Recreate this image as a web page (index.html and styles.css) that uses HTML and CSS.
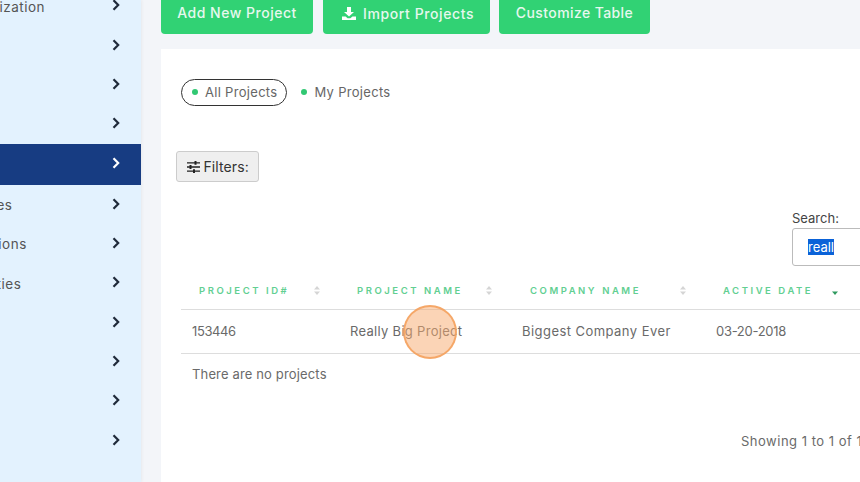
FILE: index.html
```html
<!DOCTYPE html>
<html lang="en">

<head>
    <meta charset="UTF-8">
    <meta name="viewport" content="width=device-width, initial-scale=1.0">
    <title>Projects</title>
    <link rel="stylesheet" href="styles.css">
</head>

<body>
    <svg class="defs" width="0" height="0">
        <symbol id="chevron" viewBox="0 0 8 12">
            <path d="M1.5 1.2 6.2 6 1.5 10.8" fill="none" stroke="currentColor" stroke-width="2.2" />
        </symbol>
        <symbol id="sort" viewBox="0 0 6 9">
            <path d="M3 0 6 3.4H0Z" />
            <path d="M3 9 0 5.6H6Z" />
        </symbol>
        <symbol id="sort-desc" viewBox="0 0 6 9">
            <path d="M3 9 0 5.6H6Z" />
        </symbol>
    </svg>

    <nav class="sidebar">
        <ul class="menu">
            <li class="menu-item"><span>Organization</span><svg class="chevron"><use href="#chevron" /></svg></li>
            <li class="menu-item"><span>Users</span><svg class="chevron"><use href="#chevron" /></svg></li>
            <li class="menu-item"><span>Roles</span><svg class="chevron"><use href="#chevron" /></svg></li>
            <li class="menu-item"><span>Sites</span><svg class="chevron"><use href="#chevron" /></svg></li>
            <li class="menu-item active"><span>Jobs</span><svg class="chevron"><use href="#chevron" /></svg></li>
            <li class="menu-item"><span>Devices</span><svg class="chevron"><use href="#chevron" /></svg></li>
            <li class="menu-item"><span>Donations</span><svg class="chevron"><use href="#chevron" /></svg></li>
            <li class="menu-item"><span>Activities</span><svg class="chevron"><use href="#chevron" /></svg></li>
            <li class="menu-item"><span>Tasks</span><svg class="chevron"><use href="#chevron" /></svg></li>
            <li class="menu-item"><span>Files</span><svg class="chevron"><use href="#chevron" /></svg></li>
            <li class="menu-item"><span>Logs</span><svg class="chevron"><use href="#chevron" /></svg></li>
            <li class="menu-item"><span>Help</span><svg class="chevron"><use href="#chevron" /></svg></li>
        </ul>
    </nav>

    <main class="content">
        <div class="actions">
            <button class="action-btn btn-add">Add New Project</button>
            <button class="action-btn btn-import">
                <svg class="import-icon" viewBox="0 0 14 13">
                    <path d="M5 0H9V5H12L7 9.6 2 5H5Z" />
                    <path d="M0 9.4H3.6L5.6 11.2H8.4L10.4 9.4H14V13H0Z" />
                </svg>
                Import Projects
            </button>
            <button class="action-btn btn-custom">Customize Table</button>
        </div>

        <section class="card">
            <div class="tabs">
                <a class="tab selected"><i class="dot"></i>All Projects</a>
                <a class="tab"><i class="dot"></i>My Projects</a>
            </div>

            <button class="filter-btn">
                <svg class="filter-icon" viewBox="0 0 13 12">
                    <path d="M0 1.2H13V2.6H0ZM0 5.3H13V6.7H0ZM0 9.4H13V10.8H0Z" />
                    <path d="M7.5 0H9.5V3.8H7.5ZM2.5 4.1H4.5V7.9H2.5ZM6 8.2H8V12H6Z" />
                </svg>
                Filters:
            </button>

            <div class="search">
                <label class="search-label">Search:</label>
                <div class="search-box"><span class="search-text">reall</span></div>
            </div>

            <table class="projects">
                <thead>
                    <tr>
                        <th class="col-id">Project ID#<svg class="sort"><use href="#sort" /></svg></th>
                        <th class="col-name">Project Name<svg class="sort"><use href="#sort" /></svg></th>
                        <th class="col-company">Company Name<svg class="sort"><use href="#sort" /></svg></th>
                        <th class="col-date">Active Date<svg class="sort sorted"><use href="#sort-desc" /></svg></th>
                    </tr>
                </thead>
                <tbody>
                    <tr>
                        <td class="id-cell">153446</td>
                        <td>Really Big Project</td>
                        <td class="company-cell">Biggest Company Ever</td>
                        <td class="date-cell">03-20-2018</td>
                    </tr>
                </tbody>
            </table>

            <p class="empty">There are no projects</p>
            <p class="showing">Showing 1 to 1 of 1 entries</p>
        </section>
    </main>

    <div class="click-marker"></div>
</body>

</html>
```

FILE: styles.css
```css
* {
    box-sizing: border-box;
}

body {
    display: flex;
    width: 860px;
    height: 482px;
    margin: 0;
    overflow: hidden;
    position: relative;
    font-family: Inter, "Liberation Sans", sans-serif;
    color: #5c5c5c;
    background-color: #f3f5f9;
}

.defs {
    position: absolute;
}

.sidebar {
    flex: none;
    width: 141px;
    background-color: #e3f2fe;
    box-shadow: 1px 0 3px rgba(0, 0, 0, 0.05);
    overflow: hidden;
}

.menu {
    list-style: none;
    width: 183px;
    margin: -13px 0 0 -42px;
    padding: 0;
}

.menu-item {
    display: flex;
    align-items: center;
    justify-content: space-between;
    height: 39.35px;
    padding-right: 21px;
    font-size: 13.5px;
    letter-spacing: 0.5px;
    color: #555;
}

.menu-item.active {
    height: 41px;
    color: #fff;
    background-color: #173c82;
}

.chevron {
    width: 8px;
    height: 12px;
    margin-top: -3px;
    color: #1f2a3a;
}

.active .chevron {
    color: #fff;
}

.content {
    flex: none;
    width: 900px;
    margin: -8px 0 0 20px;
}

.actions {
    display: flex;
    gap: 10px;
    margin-bottom: 15px;
}

.action-btn {
    height: 42px;
    padding: 0 0 2px;
    border: none;
    border-radius: 4px;
    font-family: inherit;
    font-size: 14px;
    font-weight: 500;
    letter-spacing: 0.5px;
    color: #e6f8ee;
    background-color: #31d274;
}

.btn-add {
    width: 152px;
}

.btn-import {
    display: flex;
    align-items: center;
    gap: 7px;
    width: 167px;
    padding: 0 0 0 19px;
    letter-spacing: 0.6px;
}

.btn-custom {
    width: 151px;
    margin-left: -1px;
    letter-spacing: 0.4px;
}

.import-icon {
    width: 14px;
    height: 13px;
    fill: #fff;
}

.card {
    height: 460px;
    padding: 30px 20px;
    background-color: #fff;
}

.tabs {
    display: flex;
    align-items: center;
    gap: 14px;
}

.tab {
    display: flex;
    align-items: center;
    gap: 7.5px;
    height: 27px;
    padding-bottom: 1px;
    font-size: 13px;
    letter-spacing: 0.3px;
    color: #666;
}

.tab.selected {
    width: 106px;
    padding-left: 9.5px;
    border: 1.5px solid #333;
    border-radius: 14px;
}

.dot {
    width: 6px;
    height: 6px;
    border-radius: 50%;
    background-color: #31c873;
}

.filter-btn {
    display: flex;
    align-items: center;
    gap: 3.5px;
    width: 83px;
    height: 31px;
    margin: 45px 0 0 -5px;
    padding: 0 0 0 10px;
    border: 1px solid #ccc;
    border-radius: 3px;
    font-family: inherit;
    font-size: 14px;
    letter-spacing: 0.1px;
    color: #333;
    background-color: #efefef;
}

.filter-icon {
    width: 13px;
    height: 12px;
    fill: #222;
}

.search {
    margin: 28px 0 0 611px;
}

.search-label {
    display: block;
    height: 18px;
    font-size: 13px;
    color: #444;
}

.search-box {
    display: flex;
    align-items: center;
    width: 200px;
    height: 38px;
    padding-left: 15px;
    border: 1px solid #bbb;
    border-radius: 3px;
    font-size: 13px;
}

.search-text {
    color: #fff;
    background-color: #0a62d8;
}

.projects {
    width: 760px;
    margin-top: 3px;
    border-collapse: collapse;
    table-layout: fixed;
}

.projects th {
    position: relative;
    height: 40px;
    padding: 3px 0 0 18px;
    border-bottom: 1px solid #ddd;
    font-size: 9.5px;
    font-weight: 600;
    letter-spacing: 2.55px;
    text-align: left;
    text-transform: uppercase;
    color: #62cf92;
}

.projects .col-company {
    padding-left: 19px;
}

.col-id {
    width: 158px;
}

.col-name {
    width: 172px;
}

.col-company {
    width: 194px;
}

.projects td {
    height: 44px;
    padding: 0 0 0 11px;
    border-bottom: 1px solid #ddd;
    font-size: 13px;
    letter-spacing: 0.3px;
    color: #6a6a6a;
}

.projects .id-cell {
    letter-spacing: -0.4px;
}

.projects .company-cell {
    letter-spacing: 0.45px;
}

.projects .date-cell {
    letter-spacing: -0.3px;
}

.sort {
    position: absolute;
    top: 17px;
    right: 19px;
    width: 6px;
    height: 9px;
    fill: #d5d5d5;
}

.sort.sorted {
    right: auto;
    left: 127px;
    fill: #2f9a5f;
}

.empty {
    margin: 12px 0 0 11px;
    font-size: 13px;
    letter-spacing: 0.15px;
    color: #6a6a6a;
}

.showing {
    margin: 51px 0 0 560px;
    font-size: 13px;
    letter-spacing: 0.5px;
    white-space: nowrap;
    color: #6a6a6a;
}

/* marker of the recorded click */
.click-marker {
    position: absolute;
    left: 403px;
    top: 305px;
    width: 54px;
    height: 54px;
    border: 2px solid rgba(244, 160, 90, 0.85);
    border-radius: 50%;
    background-color: rgba(247, 170, 110, 0.5);
}
```
